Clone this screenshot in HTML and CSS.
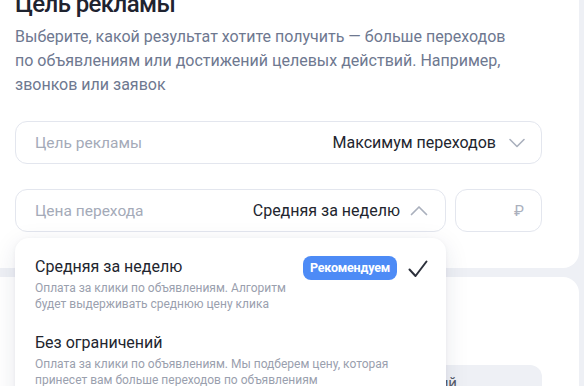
FILE: index.html
```html
<!DOCTYPE html>
<html lang="ru">
<head>
<meta charset="utf-8">
<link rel="stylesheet" href="styles.css">
</head>
<body>
<div class="page">
  <section class="card card-top">
    <h1 class="title">Цель рекламы</h1>
    <p class="subtitle">Выберите, какой результат хотите получить — больше переходов<br>по объявлениям или достижений целевых действий. Например,<br>звонков или заявок</p>

    <div class="field field-goal">
      <span class="label">Цель рекламы</span>
      <span class="value">Максимум переходов</span>
      <svg class="chev" width="16" height="10" viewBox="0 0 16 10"><path d="M1 1.5 L8 8.5 L15 1.5" fill="none" stroke="#aab0bd" stroke-width="1.6" stroke-linecap="round" stroke-linejoin="round"/></svg>
    </div>

    <div class="price-row">
      <div class="price-wrap">
        <div class="field field-price">
          <span class="label">Цена перехода</span>
          <span class="value">Средняя за неделю</span>
          <svg class="chev" width="18" height="11" viewBox="0 0 18 11"><path d="M1.5 9.5 L9 2 L16.5 9.5" fill="none" stroke="#aab0bd" stroke-width="1.7" stroke-linecap="round" stroke-linejoin="round"/></svg>
        </div>
        <div class="dropdown">
          <div class="option">
            <div class="option-text">
              <div class="option-title">Средняя за неделю</div>
              <div class="option-desc">Оплата за клики по объявлениям. Алгоритм<br>будет выдерживать среднюю цену клика</div>
            </div>
            <span class="badge">Рекомендуем</span>
            <svg class="check" width="20" height="18" viewBox="0 0 20 18"><path d="M1.5 9.5 L7.5 16 L18.5 1.5" fill="none" stroke="#2c303b" stroke-width="2" stroke-linecap="round" stroke-linejoin="round"/></svg>
          </div>
          <div class="option">
            <div class="option-text">
              <div class="option-title">Без ограничений</div>
              <div class="option-desc">Оплата за клики по объявлениям. Мы подберем цену, которая<br>принесет вам больше переходов по объявлениям</div>
            </div>
          </div>
        </div>
      </div>
      <div class="field field-rub">
        <span class="rub">₽</span>
      </div>
    </div>
  </section>

  <section class="card card-bottom">
    <div class="grey-box">
      <span class="grey-text">Недельный бюджет кампаний</span>
    </div>
  </section>
</div>
</body>
</html>
```
FILE: styles.css
```css
html, body {
  margin: 0;
  padding: 0;
}
body {
  width: 584px;
  height: 386px;
  overflow: hidden;
  background: #eef0f5;
  font-family: Roboto, "Noto Sans", Arial, sans-serif;
  color: #21242c;
}
.page {
  width: 579px;
  display: flex;
  flex-direction: column;
  gap: 9px;
}
.card {
  background: #ffffff;
}
.card-top {
  border-radius: 0 0 16px 0;
  padding: 0 37px 36px 15px;
}
.title {
  margin: -11px 0 6px;
  font-size: 24px;
  line-height: 30px;
  font-weight: 500;
  letter-spacing: -0.6px;
  color: #1f2330;
}
.subtitle {
  margin: 0 0 24px;
  font-size: 16px;
  line-height: 24px;
  color: #6e7890;
}
.field {
  box-sizing: border-box;
  height: 43px;
  border: 1px solid #e3e6ee;
  border-radius: 12px;
  display: flex;
  align-items: center;
  padding: 0 16px 0 19px;
  background: #fff;
}
.label {
  font-size: 15.5px;
  color: #a4aab8;
  flex: 1;
}
.value {
  font-size: 16px;
  color: #22252e;
}
.field-goal .chev {
  margin-left: 13px;
}
.price-row {
  margin-top: 25px;
  display: flex;
  gap: 9px;
}
.price-wrap {
  position: relative;
  width: 431px;
}
.field-price {
  padding-right: 17px;
}
.field-price .chev {
  margin-left: 10px;
}
.field-rub {
  width: 87px;
  justify-content: flex-end;
  padding-right: 17px;
}
.rub {
  font-size: 15px;
  color: #aab0bd;
}
.dropdown {
  position: absolute;
  top: 49px;
  left: 0;
  width: 431px;
  height: 200px;
  background: #fff;
  border-radius: 14px;
  box-shadow: 0 6px 24px rgba(30, 40, 80, 0.10), 0 1px 4px rgba(30, 40, 80, 0.05);
  padding-top: 8px;
  box-sizing: border-box;
  z-index: 2;
}
.option {
  display: flex;
  align-items: flex-start;
  padding: 11px 18px 10px 20px;
}
.option-text {
  flex: 1;
}
.option-title {
  font-size: 16px;
  line-height: 20px;
  color: #22252e;
  margin-bottom: 3px;
}
.option-desc {
  font-size: 12px;
  line-height: 16px;
  color: #9aa0ae;
}
.badge {
  background: #4d8bf6;
  color: #fff;
  font-size: 12.5px;
  font-weight: 700;
  height: 24px;
  line-height: 24px;
  padding: 0 7px;
  border-radius: 8px;
  margin-top: -1px;
  letter-spacing: -0.2px;
}
.check {
  margin-left: 11px;
  margin-top: 3px;
}
.card-bottom {
  border-radius: 0 16px 0 0;
  height: 120px;
  padding: 88px 37px 0 15px;
  box-sizing: border-box;
}
.grey-box {
  height: 40px;
  background: #eef0f5;
  border-radius: 12px;
  display: flex;
  align-items: flex-start;
}
.grey-text {
  width: 442px;
  text-align: right;
  font-size: 15px;
  line-height: 20px;
  padding-top: 8px;
  color: #555b68;
  white-space: nowrap;
}
```
